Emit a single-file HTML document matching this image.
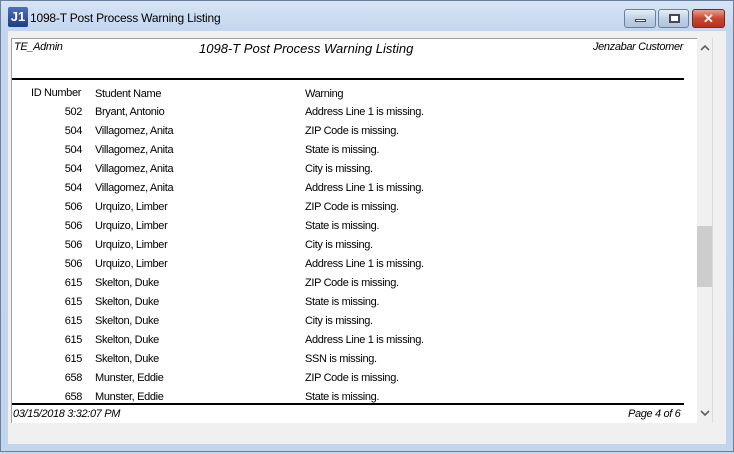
<!DOCTYPE html>
<html><head><meta charset="utf-8"><style>
*{margin:0;padding:0;box-sizing:border-box}
body{width:734px;height:452px;overflow:hidden;font-family:"Liberation Sans",sans-serif;background:#c5d7ed;position:relative}
.frame{position:absolute;left:0;top:0;width:734px;height:452px;border:1px solid #6a7f99;background:linear-gradient(#d6e4f5,#c3d6ee 30px,#c1d5ed);}
.title{position:absolute;left:30px;top:11px;font-size:12px;letter-spacing:-0.2px;color:#000}
.logo{position:absolute;left:8px;top:7px;width:20px;height:20px;background:linear-gradient(#4f6fb5,#1d3c8a);color:#fff;font-weight:bold;font-size:13px;line-height:20px;text-align:center;border-radius:2px}
.btn{position:absolute;top:9px;height:19px;border:1px solid #6b7f98;border-radius:3px;background:linear-gradient(#e6eef8,#c0d1e6 50%,#b0c4dd)}
.client{position:absolute;left:8px;top:31px;width:718px;height:413px;background:#f0f0f0}
.paper{position:absolute;left:11px;top:38px;width:686px;height:385px;background:#fff;border-left:1px solid #a0a0a0;border-top:1px solid #a0a0a0}
.sb{position:absolute;left:697px;top:38px;width:16px;height:385px;background:#f0f0f0;border-right:1px solid #dcdcdc}
.thumb{position:absolute;left:697px;top:226px;width:15px;height:61px;background:#cdcdcd}
.t{position:absolute;font-size:11px;letter-spacing:-0.35px;white-space:nowrap;color:#000}
.i{font-style:italic}
.line{position:absolute;left:12px;width:672px;height:2px;background:#000}
.id{width:82px;text-align:right;left:0}
</style></head><body>
<div class="frame"></div>
<div class="logo">J1</div>
<div class="title">1098-T Post Process Warning Listing</div>
<div class="btn" style="left:624px;width:32px"><div style="position:absolute;left:10px;top:9px;width:11px;height:3px;background:#fff;border:1px solid #445"></div></div>
<div class="btn" style="left:658px;width:31px"><div style="position:absolute;left:10px;top:4px;width:11px;height:9px;border:2px solid #445;background:#fff"></div></div>
<div class="btn" style="left:692px;width:33px;background:linear-gradient(#e8a08f,#c9452f 50%,#b8331f);border-color:#6e2a20;color:#fff;font-weight:bold;text-align:center;font-size:13px;line-height:17px">✕</div>
<div class="client"></div>
<div class="paper"></div>
<div class="sb"></div>
<div class="thumb"></div>
<svg style="position:absolute;left:700px;top:44px" width="10" height="8"><path d="M1 6 L5 2 L9 6" stroke="#606060" stroke-width="1.6" fill="none"/></svg>
<svg style="position:absolute;left:700px;top:409px" width="10" height="8"><path d="M1 2 L5 6 L9 2" stroke="#606060" stroke-width="1.6" fill="none"/></svg>
<div class="t i" style="left:14px;top:41px">TE_Admin</div>
<div class="t i" style="left:199px;top:41px;font-size:13px;letter-spacing:0">1098-T Post Process Warning Listing</div>
<div class="t i" style="left:593px;top:41px;width:91px;overflow:hidden">Jenzabar Customer</div>
<div class="line" style="top:78px"></div>
<div class="line" style="top:403px"></div>
<div class="t i" style="left:13px;top:408px">03/15/2018 3:32:07 PM</div>
<div class="t i" style="left:628px;top:408px;width:56px;overflow:hidden">Page 4 of 6</div>
<div class="t" style="left:31px;top:87px">ID Number</div>
<div class="t" style="left:95px;top:88px">Student Name</div>
<div class="t" style="left:305px;top:88px">Warning</div>
<div style="position:absolute;left:0;top:2px;width:734px;height:452px">
<div class="t id" style="top:104px">502</div><div class="t" style="left:95px;top:104px">Bryant, Antonio</div><div class="t" style="left:305px;top:104px">Address Line 1 is missing.</div>
<div class="t id" style="top:123px">504</div><div class="t" style="left:95px;top:123px">Villagomez, Anita</div><div class="t" style="left:305px;top:123px">ZIP Code is missing.</div>
<div class="t id" style="top:142px">504</div><div class="t" style="left:95px;top:142px">Villagomez, Anita</div><div class="t" style="left:305px;top:142px">State is missing.</div>
<div class="t id" style="top:161px">504</div><div class="t" style="left:95px;top:161px">Villagomez, Anita</div><div class="t" style="left:305px;top:161px">City is missing.</div>
<div class="t id" style="top:180px">504</div><div class="t" style="left:95px;top:180px">Villagomez, Anita</div><div class="t" style="left:305px;top:180px">Address Line 1 is missing.</div>
<div class="t id" style="top:199px">506</div><div class="t" style="left:95px;top:199px">Urquizo, Limber</div><div class="t" style="left:305px;top:199px">ZIP Code is missing.</div>
<div class="t id" style="top:218px">506</div><div class="t" style="left:95px;top:218px">Urquizo, Limber</div><div class="t" style="left:305px;top:218px">State is missing.</div>
<div class="t id" style="top:237px">506</div><div class="t" style="left:95px;top:237px">Urquizo, Limber</div><div class="t" style="left:305px;top:237px">City is missing.</div>
<div class="t id" style="top:256px">506</div><div class="t" style="left:95px;top:256px">Urquizo, Limber</div><div class="t" style="left:305px;top:256px">Address Line 1 is missing.</div>
<div class="t id" style="top:275px">615</div><div class="t" style="left:95px;top:275px">Skelton, Duke</div><div class="t" style="left:305px;top:275px">ZIP Code is missing.</div>
<div class="t id" style="top:294px">615</div><div class="t" style="left:95px;top:294px">Skelton, Duke</div><div class="t" style="left:305px;top:294px">State is missing.</div>
<div class="t id" style="top:313px">615</div><div class="t" style="left:95px;top:313px">Skelton, Duke</div><div class="t" style="left:305px;top:313px">City is missing.</div>
<div class="t id" style="top:332px">615</div><div class="t" style="left:95px;top:332px">Skelton, Duke</div><div class="t" style="left:305px;top:332px">Address Line 1 is missing.</div>
<div class="t id" style="top:351px">615</div><div class="t" style="left:95px;top:351px">Skelton, Duke</div><div class="t" style="left:305px;top:351px">SSN is missing.</div>
<div class="t id" style="top:370px">658</div><div class="t" style="left:95px;top:370px">Munster, Eddie</div><div class="t" style="left:305px;top:370px">ZIP Code is missing.</div>
<div class="t id" style="top:389px">658</div><div class="t" style="left:95px;top:389px">Munster, Eddie</div><div class="t" style="left:305px;top:389px">State is missing.</div>
</div>
</body></html>
